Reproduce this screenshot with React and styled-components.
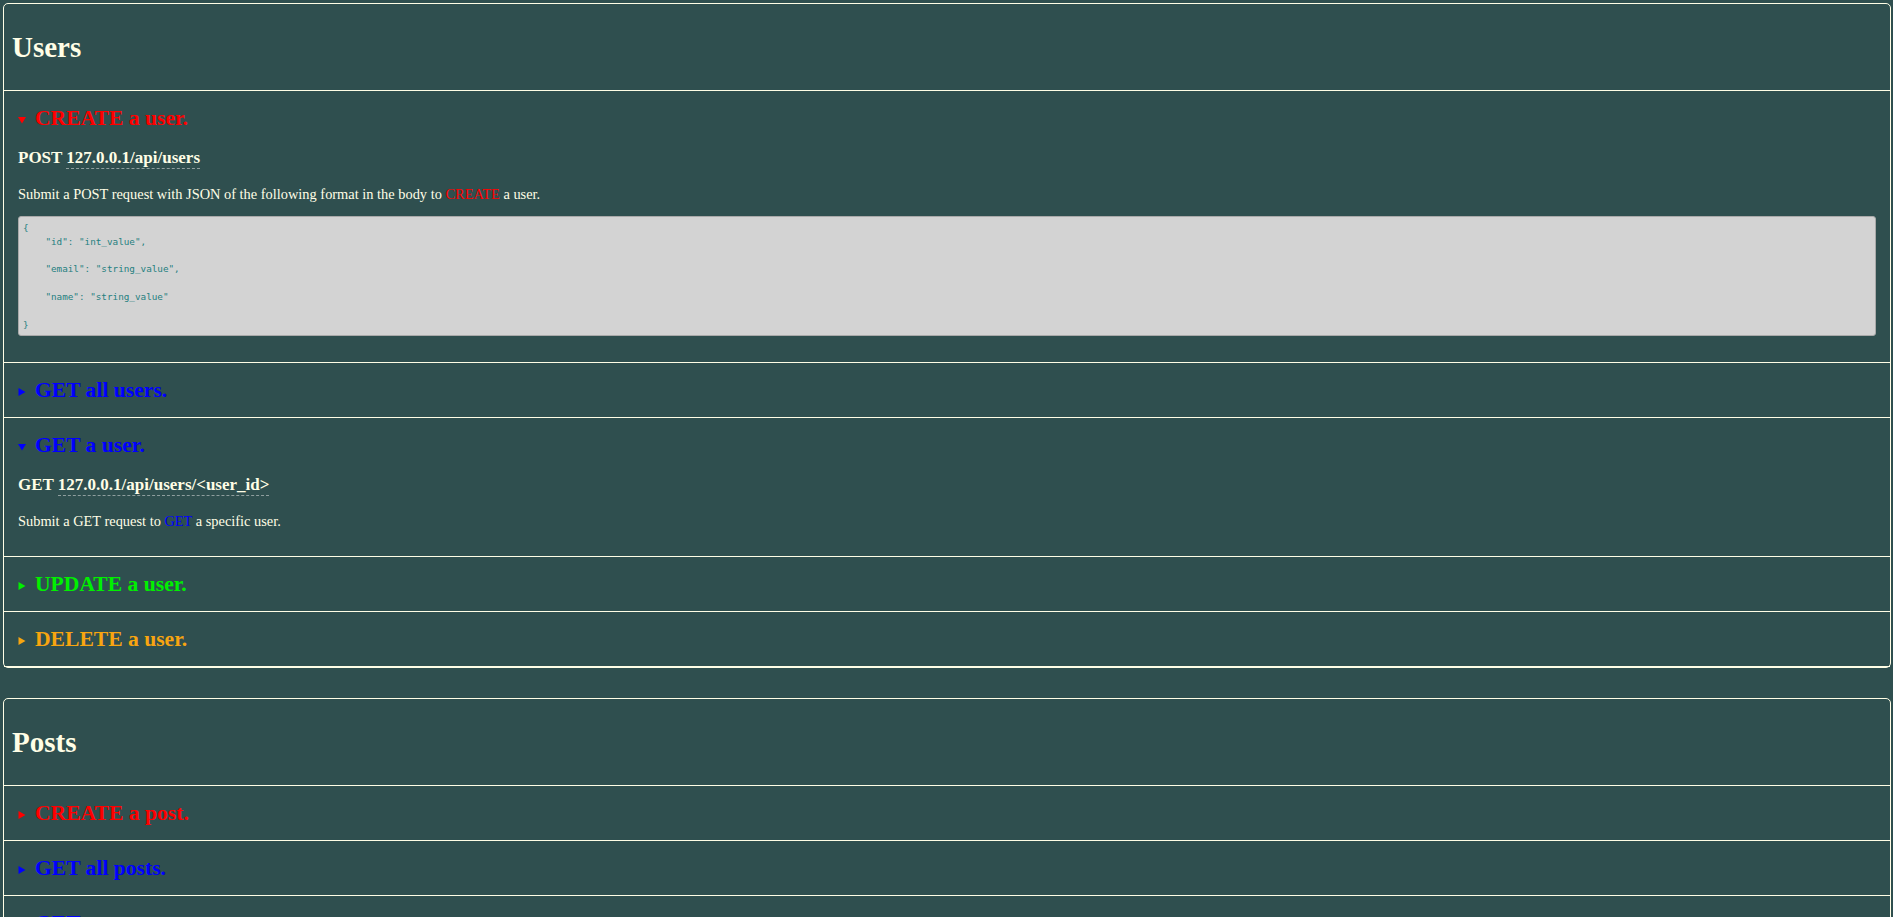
import React, { useState } from 'react';
import styled, { createGlobalStyle } from 'styled-components';

const ink = '#fffee6'

const GlobalStyle = createGlobalStyle`
  body {
    margin: 0;
    background: #2f4f4f;
    color: ${ink};
    font-family: "Liberation Serif", "Times New Roman", serif;
  }
`

const Page = styled.div`
  display: flex;
  flex-direction: column;
  gap: 30px;
  padding: 3px 2px 3px 3px;
`

const Resource = styled.section`
  border: 1px solid ${ink};
  border-radius: 5px;
`

const ResourceHeader = styled.h1`
  margin: 0;
  height: 86px;
  display: flex;
  align-items: center;
  padding-left: 8px;
  font-size: 29px;
  font-weight: 700;
  border-bottom: 1px solid ${ink};
`

const Endpoint = styled.details`
  border-bottom: 1px solid ${ink};
  padding: 0 14px;
`

const Summary = styled.summary`
  list-style: none;
  height: 54px;
  display: flex;
  align-items: center;
  gap: 9px;
  cursor: pointer;
  color: ${p => p.$color};

  &::-webkit-details-marker {
    display: none;
  }
`

const Marker = styled.svg`
  width: 8px;
  height: 8px;
  margin-top: 3px;
  flex-shrink: 0;
`

const Title = styled.h2`
  margin: 0;
  font-size: 21.6px;
  font-weight: 700;
`

const Body = styled.div`
  padding-bottom: 26px;
`

const Route = styled.h3`
  margin: 2px 0 0;
  font-size: 17px;
  line-height: 22px;
  font-weight: 700;
`

const Url = styled.span`
  border-bottom: 1px dashed #8f9e9e;
  padding-bottom: 1px;
`

const Text = styled.p`
  margin: 16px 0 0;
  font-size: 14.4px;
  line-height: 18px;
`

const Verb = styled.span`
  color: ${p => p.$color};
`

const Code = styled.pre`
  margin: 13px 0 0;
  padding: 4px;
  background: #d3d3d3;
  border: 1px solid #a9a9a9;
  border-radius: 3px;
  color: #1f7f7f;
  font-family: "DejaVu Sans Mono", "Liberation Mono", monospace;
  font-size: 9.3px;
  line-height: 13.8px;
`

const colors = {
  POST: '#ff0000',
  GET: '#0000ff',
  PUT: '#00f000',
  DELETE: '#f8a510',
}

function Triangle({ open }) {
  return (
    <Marker viewBox="0 0 8 8">
      {open
        ? <polygon points="0,1 8,1 4,7.5" fill="currentColor" />
        : <polygon points="0.5,0 7.5,4 0.5,8" fill="currentColor" />}
    </Marker>
  )
}

function EndpointItem({ method, title, defaultOpen, children }) {
  const [open, setOpen] = useState(!!defaultOpen)
  return (
    <Endpoint open={open} onToggle={e => setOpen(e.currentTarget.open)}>
      <Summary $color={colors[method]}>
        <Triangle open={open} />
        <Title>{title}</Title>
      </Summary>
      {open && <Body>{children}</Body>}
    </Endpoint>
  )
}

const userJson = `{
    "id": "int_value",

    "email": "string_value",

    "name": "string_value"

}`

const postJson = `{
    "id": "int_value",

    "title": "string_value",

    "body": "string_value",

    "user_id": "int_value"

}`

export default function App() {
  return (
    <>
      <GlobalStyle />
      <Page>
        <Resource>
          <ResourceHeader>Users</ResourceHeader>
          <EndpointItem method="POST" title="CREATE a user." defaultOpen>
            <Route>POST <Url>127.0.0.1/api/users</Url></Route>
            <Text>
              Submit a POST request with JSON of the following format in the body to <Verb $color={colors.POST}>CREATE</Verb> a user.
            </Text>
            <Code>{userJson}</Code>
          </EndpointItem>
          <EndpointItem method="GET" title="GET all users.">
            <Route>GET <Url>127.0.0.1/api/users</Url></Route>
            <Text>
              Submit a GET request to <Verb $color={colors.GET}>GET</Verb> all users.
            </Text>
          </EndpointItem>
          <EndpointItem method="GET" title="GET a user." defaultOpen>
            <Route>GET <Url>127.0.0.1/api/users/&lt;user_id&gt;</Url></Route>
            <Text>
              Submit a GET request to <Verb $color={colors.GET}>GET</Verb> a specific user.
            </Text>
          </EndpointItem>
          <EndpointItem method="PUT" title="UPDATE a user.">
            <Route>PUT <Url>127.0.0.1/api/users/&lt;user_id&gt;</Url></Route>
            <Text>
              Submit a PUT request with JSON in the body to <Verb $color={colors.PUT}>UPDATE</Verb> a user.
            </Text>
            <Code>{userJson}</Code>
          </EndpointItem>
          <EndpointItem method="DELETE" title="DELETE a user.">
            <Route>DELETE <Url>127.0.0.1/api/users/&lt;user_id&gt;</Url></Route>
            <Text>
              Submit a DELETE request to <Verb $color={colors.DELETE}>DELETE</Verb> a user.
            </Text>
          </EndpointItem>
        </Resource>

        <Resource>
          <ResourceHeader>Posts</ResourceHeader>
          <EndpointItem method="POST" title="CREATE a post.">
            <Route>POST <Url>127.0.0.1/api/posts</Url></Route>
            <Text>
              Submit a POST request with JSON of the following format in the body to <Verb $color={colors.POST}>CREATE</Verb> a post.
            </Text>
            <Code>{postJson}</Code>
          </EndpointItem>
          <EndpointItem method="GET" title="GET all posts.">
            <Route>GET <Url>127.0.0.1/api/posts</Url></Route>
            <Text>
              Submit a GET request to <Verb $color={colors.GET}>GET</Verb> all posts.
            </Text>
          </EndpointItem>
          <EndpointItem method="GET" title="GET a post.">
            <Route>GET <Url>127.0.0.1/api/posts/&lt;post_id&gt;</Url></Route>
            <Text>
              Submit a GET request to <Verb $color={colors.GET}>GET</Verb> a specific post.
            </Text>
          </EndpointItem>
          <EndpointItem method="PUT" title="UPDATE a post.">
            <Route>PUT <Url>127.0.0.1/api/posts/&lt;post_id&gt;</Url></Route>
            <Text>
              Submit a PUT request with JSON in the body to <Verb $color={colors.PUT}>UPDATE</Verb> a post.
            </Text>
          </EndpointItem>
          <EndpointItem method="DELETE" title="DELETE a post.">
            <Route>DELETE <Url>127.0.0.1/api/posts/&lt;post_id&gt;</Url></Route>
            <Text>
              Submit a DELETE request to <Verb $color={colors.DELETE}>DELETE</Verb> a post.
            </Text>
          </EndpointItem>
        </Resource>
      </Page>
    </>
  )
}
